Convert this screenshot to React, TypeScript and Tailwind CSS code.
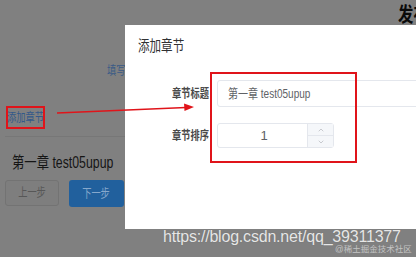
import { FiChevronUp, FiChevronDown } from "react-icons/fi";

const font = "font-['Liberation_Sans','Noto_Sans_CJK_SC',sans-serif]";
// the shot is squeezed sideways, so the text is narrowed to match
const squeeze = "inline-block whitespace-nowrap scale-x-[0.77]";

export default function App() {
  return (
    <div className={`relative h-[257px] w-[416px] overflow-hidden bg-[#808080] ${font}`}>
      {/* page behind the mask */}
      <div className="flex h-full flex-col">
        <div className="h-[28px] pl-[398px] pt-[3px] text-[20px] font-bold leading-[24px] text-[#0a0a0a]">
          <span className={`${squeeze} origin-left`}>发布章节</span>
        </div>
        <div className="mt-[35px] pl-[107px] text-[12px] leading-[16px] text-[#3a5b86]">
          <span className={`${squeeze} origin-left`}>填写章节信息</span>
        </div>
        <div className="mt-[27px] pl-[6px]">
          <div className="flex h-[23px] w-[39px] items-center overflow-hidden border-2 border-[#e0141a]">
            <span className={`${squeeze} origin-left -ml-[1px] text-[12px] leading-none text-[#33598a]`}>
              添加章节
            </span>
          </div>
        </div>
        <div className="ml-[5px] mt-[7px] w-[120px] border-t border-[#777777]" />
        <div className="ml-[12px] mt-[16px] text-[16px] leading-[20px] text-[#151515]">
          <span className={`${squeeze} origin-left`}>第一章 test05upup</span>
        </div>
        <div className="ml-[5px] mt-[7px] flex gap-[10px]">
          <button className="flex h-[26px] w-[54px] items-center justify-center rounded-[3px] border border-[#737373] bg-[#7e7e7e] text-[12px] text-[#575757]">
            <span className={squeeze}>上一步</span>
          </button>
          <button className="flex h-[27px] w-[55px] items-center justify-center rounded-[3px] bg-[#21609d] text-[12px] text-[#86a8cc]">
            <span className={squeeze}>下一步</span>
          </button>
        </div>
      </div>

      {/* dialog */}
      <div className="absolute left-[125px] top-[25px] h-[204px] w-[300px] bg-white">
        <div className="pl-[13px] pt-[12px] text-[15px] leading-[18px] text-[#303133]">
          <span className={`${squeeze} origin-left`}>添加章节</span>
        </div>
        <div className="mt-[25px] flex flex-col gap-[16px]">
          <div className="flex items-center">
            <label className="w-[84px] text-right text-[12px] font-bold text-[#4a4a4a]">
              <span className={`${squeeze} origin-right`}>章节标题</span>
            </label>
            <div className="ml-[8px] flex h-[27px] flex-1 items-center rounded-[3px] border border-[#e4e7ed] pl-[10px] text-[13px] text-[#606266]">
              <span className={`${squeeze} origin-left`}>第一章 test05upup</span>
            </div>
          </div>
          <div className="flex items-center">
            <label className="w-[84px] text-right text-[12px] font-bold text-[#4a4a4a]">
              <span className={`${squeeze} origin-right`}>章节排序</span>
            </label>
            <div className="ml-[8px] flex h-[25px] w-[117px] rounded-[3px] border border-[#e4e7ed]">
              <div className="flex flex-1 items-center justify-center pl-[3px] text-[13px] text-[#606266]">
                1
              </div>
              <div className="flex w-[26px] flex-col border-l border-[#e4e7ed] bg-[#f5f7fa] text-[#b0b3ba]">
                <div className="flex flex-1 items-center justify-center border-b border-[#e4e7ed]">
                  <FiChevronUp size={8} />
                </div>
                <div className="flex flex-1 items-center justify-center">
                  <FiChevronDown size={8} />
                </div>
              </div>
            </div>
          </div>
        </div>
        {/* highlight box */}
        <div className="absolute left-[85px] top-[47px] h-[91px] w-[147px] border-2 border-[#e0141a]" />
      </div>

      {/* arrow */}
      <svg className="absolute left-0 top-0" width="416" height="257">
        <line x1="57" y1="113" x2="186" y2="107.5" stroke="#e0141a" strokeWidth="1.6" />
        <polygon points="194,107 184,103.5 184.5,111" fill="#e0141a" />
      </svg>

      {/* watermark */}
      <div className="absolute left-[163px] top-[227px] whitespace-nowrap text-[16px] leading-[20px] tracking-[-0.2px] text-[#e6e6e6] [text-shadow:0_0_1px_#666]">
        https://blog.csdn.net/qq_39311377
      </div>
      <div className="absolute left-[335px] top-[244px] whitespace-nowrap text-[8.5px] leading-[11px] text-[#c4c4c4]">
        @稀土掘金技术社区
      </div>
    </div>
  );
}
